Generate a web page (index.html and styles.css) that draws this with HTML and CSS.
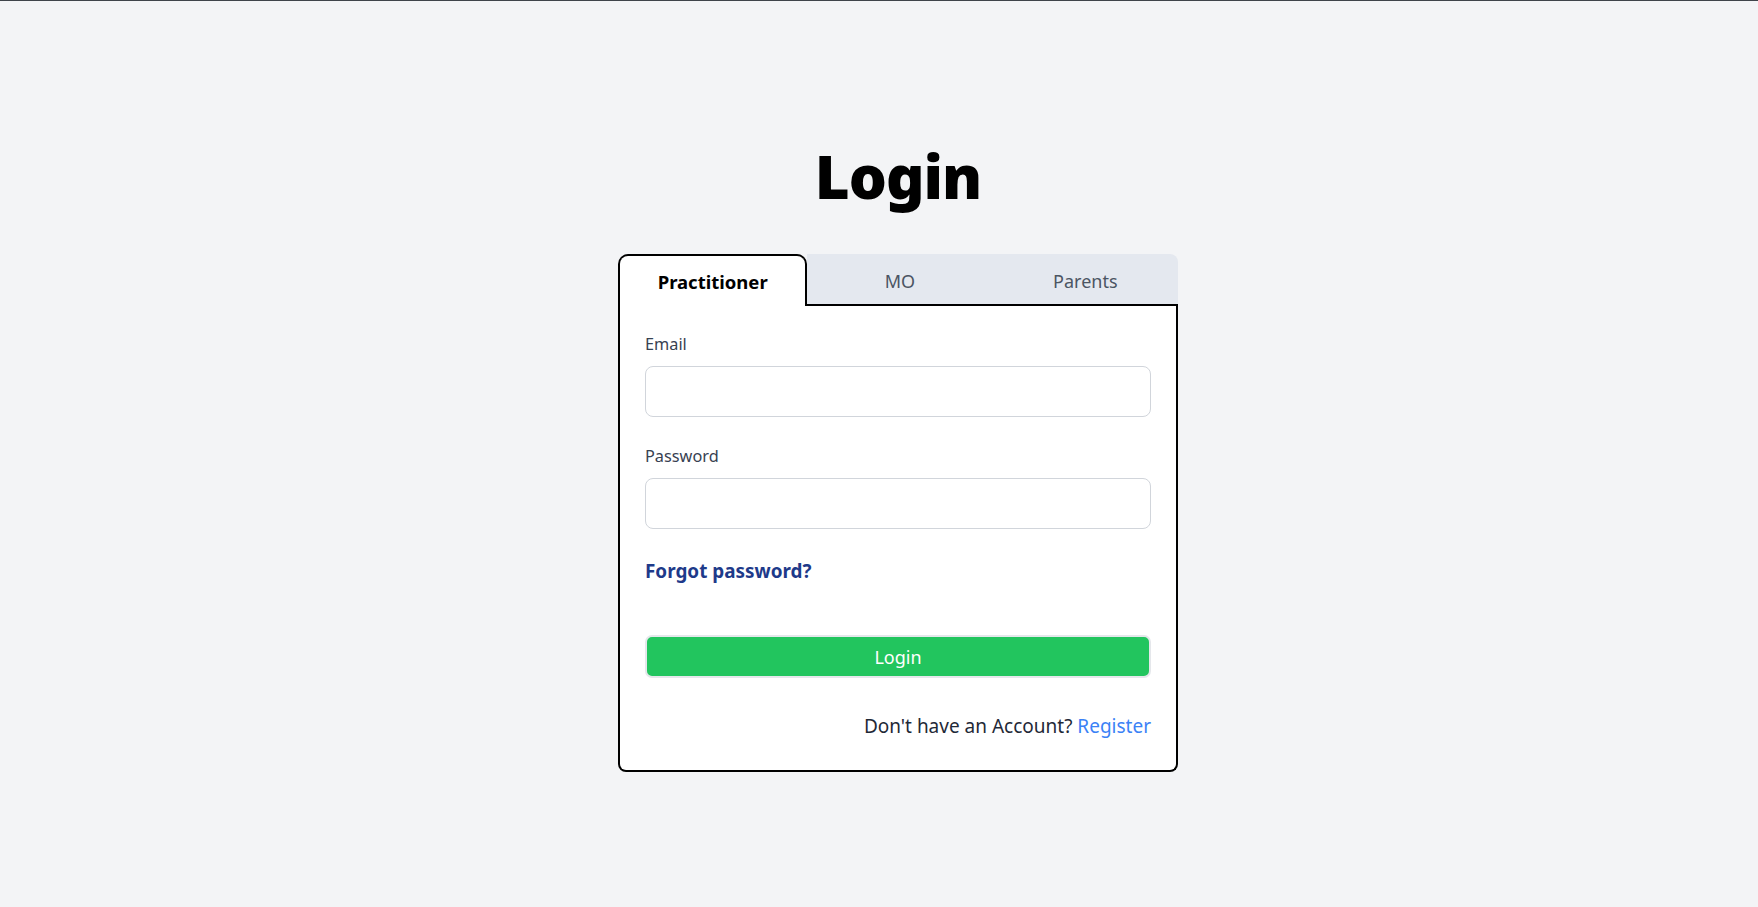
FILE: index.html
```
<!DOCTYPE html>
<html>
<head>
	<title>Login</title>
<link rel="stylesheet" href="styles.css">
</head>

<body>

<div class="page">
	<h1 class="pageTitle">Login</h1>

	<div class="loginBox">
		<div class="tabsRow">
			<span class="tab tabActive">Practitioner</span>
			<span class="tab tabInactive">MO</span>
			<span class="tab tabInactive tabLast">Parents</span>
		</div>
		<form class="loginForm" onsubmit="return false;">
			<div class="field">
				<label class="fieldLabel" for="email">Email</label>
				<input class="fieldInput" type="email" id="email">
			</div>
			<div class="field">
				<label class="fieldLabel" for="password">Password</label>
				<input class="fieldInput" type="password" id="password">
			</div>
			<a class="forgotLink" href="#">Forgot password?</a>
			<button class="loginButton" type="submit">Login</button>
			<div class="registerLine">Don't have an Account? <a href="#">Register</a></div>
		</form>
	</div>
</div>

</body>
</html>
```

FILE: styles.css
```
* {
	box-sizing: border-box;
}
html, body {
	margin: 0;
	padding: 0;
}
body {
	background-color: #f3f4f6;
	border-top: 1px solid #3f444a;
	font-family: "Noto Sans", "Open Sans", sans-serif;
	color: #1f2937;
	min-height: 907px;
}
.page {
	display: flex;
	flex-direction: column;
	align-items: center;
	padding-top: 145px;
	padding-left: 38px;
}
.pageTitle {
	margin: 0 0 48px 0;
	font-size: 60px;
	line-height: 60px;
	font-weight: 900;
	color: #000;
	letter-spacing: -1px;
}
.loginBox {
	width: 560px;
}
.tabsRow {
	display: flex;
}
.tab {
	flex: 1;
	height: 52px;
	text-align: center;
	font-size: 18px;
	line-height: 28px;
}
.tabActive {
	background-color: #fff;
	border: 2px solid #000;
	border-bottom: none;
	border-radius: 10px 10px 0 0;
	font-weight: 700;
	font-size: 18.5px;
	color: #000;
	padding-top: 12px;
}
.tabInactive {
	background-color: #e4e8ef;
	border-bottom: 2px solid #000;
	color: #4b5563;
	padding-top: 13px;
	cursor: pointer;
}
.tabLast {
	border-top-right-radius: 8px;
}
.loginForm {
	background-color: #fff;
	border: 2px solid #000;
	border-top: none;
	border-radius: 0 0 8px 8px;
	padding: 26px 25px 30px 25px;
	display: flex;
	flex-direction: column;
}
.field {
	display: flex;
	flex-direction: column;
	margin-bottom: 27px;
}
.fieldLabel {
	font-size: 16.3px;
	line-height: 24px;
	color: #374151;
	margin-bottom: 10px;
}
.fieldInput {
	height: 51px;
	width: 100%;
	border: 1px solid #d1d5db;
	border-radius: 8px;
	background: #fff;
	font-family: inherit;
	font-size: 16px;
	padding: 0 12px;
}
.forgotLink {
	align-self: flex-start;
	margin-top: 1px;
	font-size: 18.9px;
	line-height: 28px;
	font-weight: 700;
	color: #1e3a8a;
	text-decoration: none;
}
.loginButton {
	margin-top: 50px;
	height: 43px;
	width: 100%;
	background-color: #22c55e;
	border: 2px solid #e5e7eb;
	border-radius: 7px;
	color: #fff;
	font-family: inherit;
	font-size: 18px;
	line-height: 28px;
	cursor: pointer;
}
.registerLine {
	margin-top: 34px;
	text-align: right;
	font-size: 19px;
	line-height: 28px;
	color: #1f2937;
}
.registerLine a {
	color: #3b82f6;
	text-decoration: none;
}
```
